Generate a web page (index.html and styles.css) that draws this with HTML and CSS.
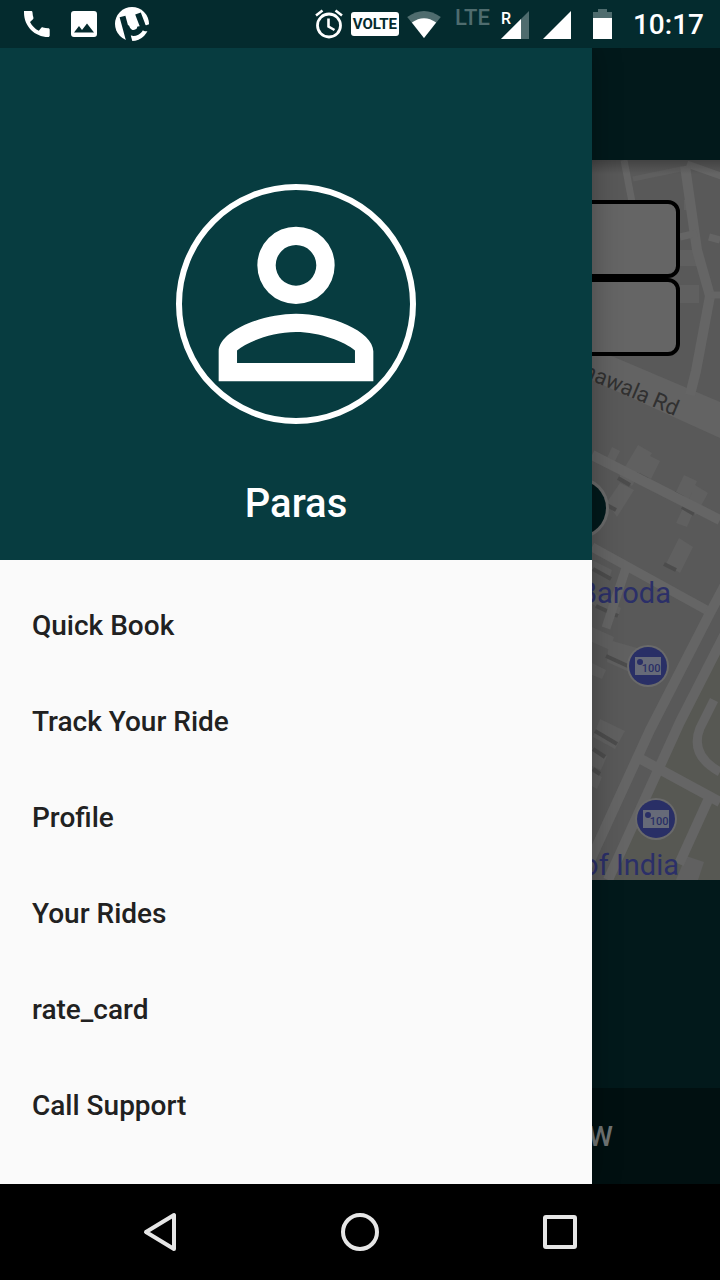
FILE: index.html
```html
<!DOCTYPE html>
<html lang="en">
<head>
<meta charset="utf-8">
<meta name="viewport" content="width=device-width, initial-scale=1">
<title>Ride booking</title>
<link rel="stylesheet" href="styles.css">
</head>
<body>
<header class="status">
  <div class="status-group">
    <svg class="icon-slot" viewBox="0 0 34 34" aria-label="Phone"><path fill="#fff" d="M4 5h7c.9 0 1.400.5 1.500 1.400.1 1.800.4 3.500.9 5.200.2.600 0 1.200-.4 1.600l-3 2.800c2 3.900 4.900 6.800 8.800 8.800l2.500-3c.5-.5 1.100-.6 1.700-.4 1.600.5 3.400.8 5.200.9.900 0 1.500.6 1.500 1.500v5.700c0 .9-.6 1.500-1.500 1.500C14.800 31 4 20.300 4 6.500z" transform="translate(1 -1)"/></svg>
    <svg class="icon-slot" viewBox="0 0 34 34" aria-label="Picture"><path fill="#fff" fill-rule="evenodd" d="M7 4h20q3 0 3 3v20q0 3-3 3H7q-3 0-3-3V7q0-3 3-3zM7 25.500h20l-7-9-5 6.500-3-4z"/></svg>
    <svg class="icon-slot" viewBox="0 0 34 34" aria-label="Torrent"><circle cx="17" cy="17" r="17" fill="#fff"/><path fill="none" stroke="#042b2e" stroke-width="6" d="M7.500 9.500L15 37M11 19c2 7 7 8 11 6 3-1.500 3.500-4 3-6M23 6.500L27 17c1.500 5 4 5 8 3"/></svg>
  </div>
  <div class="status-group status-right">
    <svg width="28" height="30" viewBox="0 0 28 30" fill="none" stroke="#fff" aria-label="Alarm"><circle cx="14" cy="16.500" r="11.500" stroke-width="2.800"/><path stroke-width="2.600" d="M13.500 9.500v8l6 3.500M1 6.500l6.500-5M27 6.500l-6.500-5"/></svg>
    <span class="volte">VOLTE</span>
    <svg width="34" height="28" viewBox="0 0 36 30" aria-label="Wi-Fi"><path fill="#4f6c6e" d="M0 7.500Q18-5.500 36 7.500L18 30z"/><path fill="#fff" d="M5 13.500Q18 4 31 13.500L18 30z"/></svg>
    <span class="lte">LTE</span>
    <span class="roaming">R<svg class="signal" width="28" height="28" viewBox="0 0 28 28"><path fill="#4f6c6e" d="M28 0v28H0z"/><path fill="#fff" d="M20 8v20H0z"/></svg></span>
    <svg class="second-signal" width="28" height="28" viewBox="0 0 28 28" aria-label="Signal"><path fill="#fff" d="M28 0v28H0z"/></svg>
    <svg class="battery" width="19" height="30" viewBox="0 0 19 30" aria-label="Battery"><path fill="#4f6c6e" d="M5 0h9v3h5v6H0V3h5z"/><path fill="#fff" d="M0 9h19v21H0z"/></svg>
    <time class="clock">10:17</time>
  </div>
</header>

<main class="screen">
  <section class="booking">
    <div class="appbar"></div>
    <div class="map">
      <svg class="map-canvas" viewBox="0 0 720 720" preserveAspectRatio="xMaxYMid slice">
        <defs>
          <linearGradient id="fade" x1="0" y1="0" x2="0" y2="1"><stop offset="0" stop-color="#000" stop-opacity=".25"/><stop offset="1" stop-color="#000" stop-opacity="0"/></linearGradient>
          <g id="atm">
            <circle r="21" fill="#6a6a6a"/><circle r="19" fill="#292f66"/>
            <path fill="#666a78" d="M-13-9h26V9h-26z"/><circle cx="-8" cy="-4" r="3" fill="#292f66"/>
            <text x="3" y="6" class="atm-label">100</text>
          </g>
        </defs>
        <path fill="#595959" d="M0 0h720v720H0z"/>
        <path fill="#575853" d="M720 478v242H610l70-160z"/>
        <g fill="#606060">
          <path d="M680 90h16l2 16h-18zM680 125h19v18h-19zM684 40h6l2 10h-8z"/>
          <path fill="#636363" d="M592 190l22 7 106 45v36l-128-58z"/>
          <path d="M619 317l19-32 14 8-20 33zM607 342l13-19 14 7-17 27zM640 313l8-18 12 6-9 18zM676 332l8-17 13 6-8 18zM686 347l9-22 13 8-12 22zM676 363l7-15 10 5-6 14zM606 300l6-13 8 4-7 14z"/>
          <path d="M666 404l13-26 14 9-13 26zM592 400l20 10-3 9-17-10zM594 433l27 15-3 9-28-14zM592 467l22 10-4 13-18-8zM609 480l42 12-8 26-36-16zM592 503l14 7-4 9-10-4zM600 559l25 12-10 18-22-12zM592 588l15 8-6 14-9-4zM686 696l18 6-6 18h-22zM592 612l10 5-5 12-5-3z"/>
        </g>
        <g fill="none" stroke="#4c4c4c" stroke-width="4">
          <path d="M618 318l12 7M636 314l12 6M603 343l13 7M674 333l9 5M682 347l12 7M664 404l12 6M593 409l18 10M596 446l22 10M606 496l35 16M595 571l22 13M593 589l12 8M593 609l7 5"/>
        </g>
        <g fill="none" stroke="#656565">
          <path stroke-width="7" d="M624 0l8 42M687 4l34 12"/>
          <path stroke="#5f5f5f" stroke-width="5" d="M633 19l48-10"/>
          <path stroke-width="10" d="M685 6l12 84 13 46-14 75-6 24M592 295l128 65"/>
          <path stroke-width="7" d="M680 77l17-4M709 77l11 3M711 135h9"/>
          <path stroke-width="9" d="M592 387l118 65M626 408l-20 60"/>
          <path stroke-width="10" d="M728 419l-18 34-60 117-66 144M732 460l-52 102-72 158M637 597l83 45M709 638l-30 66"/>
          <path stroke-width="9" d="M714 540l-14 28c-8 20 2 34 20 44"/>
        </g>
        <circle cx="578" cy="348" r="31" fill="#6a6a6a"/><circle cx="578" cy="348" r="28" fill="#02191b"/>
        <text class="road-label" transform="translate(675 256) rotate(23)">hawala Rd</text>
        <text class="place-label" x="671" y="443">Baroda</text>
        <text class="place-label" x="679" y="715">of India</text>
        <use href="#atm" x="648" y="506"/>
        <use href="#atm" x="656" y="659"/>
        <path fill="url(#fade)" d="M0 0h720v14H0z"/>
      </svg>
      <form class="route">
        <input class="route-field" type="text" aria-label="Pickup">
        <input class="route-field" type="text" aria-label="Drop">
      </form>
    </div>
    <div class="details"></div>
    <button class="book" type="button">W</button>
  </section>

  <aside class="drawer">
    <div class="profile">
      <div class="avatar">
        <svg class="avatar-icon" viewBox="0 0 24 24" fill="#fff" fill-rule="evenodd" aria-hidden="true"><path d="M12 5.900a2.100 2.100 0 1 0 0 4.200a2.100 2.100 0 1 0 0-4.200M12 4a4 4 0 1 1 0 8a4 4 0 1 1 0-8zM12 13C8.500 13 4 14.800 4 16.900V20h16v-3.100C20 14.800 15.500 13 12 13zm0 1.900c2.500 0 5 1 6.100 1.900v1.300H5.900v-1.300C7 15.900 9.500 14.900 12 14.900z"/></svg>
      </div>
      <h1 class="name">Paras</h1>
    </div>
    <nav class="menu">
      <a class="menu-item" href="#book">Quick Book</a>
      <a class="menu-item" href="#track">Track Your Ride</a>
      <a class="menu-item" href="#profile">Profile</a>
      <a class="menu-item" href="#rides">Your Rides</a>
      <a class="menu-item" href="#rates">rate_card</a>
      <a class="menu-item" href="#support">Call Support</a>
    </nav>
  </aside>
</main>

<footer class="navbar">
  <button class="nav-button" type="button" aria-label="Back"><svg width="40" height="40" viewBox="0 0 40 40"><path d="M6 20L34 3v34z"/></svg></button>
  <button class="nav-button" type="button" aria-label="Home"><svg width="40" height="40" viewBox="0 0 40 40"><circle cx="20" cy="20" r="17"/></svg></button>
  <button class="nav-button" type="button" aria-label="Recents"><svg width="40" height="40" viewBox="0 0 40 40"><rect x="5" y="5" width="30" height="30" rx="1"/></svg></button>
</footer>
</body>
</html>
```

FILE: styles.css
```css
* { box-sizing: border-box; }

body {
  margin: 0;
  min-height: 100vh;
  display: flex;
  flex-direction: column;
  background: #000;
  font-family: Roboto, "Liberation Sans", sans-serif;
  font-weight: 500;
}

svg { display: block; flex: none; }

/* Status bar */
.status {
  position: relative;
  z-index: 2;
  height: 48px;
  padding: 0 16px 0 19px;
  display: flex;
  align-items: center;
  justify-content: space-between;
  background: #042b2e;
  color: #fff;
}
.status-group { display: flex; align-items: center; gap: 14px; }
.status-right { gap: 8px; }
.icon-slot { width: 34px; height: 34px; }
.volte {
  width: 48px;
  height: 24px;
  border-radius: 3px;
  background: #fff;
  color: #042b2e;
  font-size: 15px;
  font-weight: 700;
  line-height: 25px;
  text-align: center;
}
.lte {
  margin: 0 3px 12px 6px;
  color: #4f6c6e;
  font-size: 22px;
  line-height: 24px;
}
.roaming {
  position: relative;
  width: 28px;
  height: 28px;
  font-size: 16px;
  line-height: 16px;
}
.signal { position: absolute; inset: 0; }
.roaming, .second-signal { margin-top: 2px; }
.second-signal { margin-left: 6px; }
.battery { margin: 0 13px 0 14px; }
.clock { font-size: 28px; line-height: 48px; padding-top: 2px; }

/* Screen: booking page with the drawer on top */
.screen { flex: 1; display: grid; }
.booking, .drawer { grid-area: 1 / 1; }
.booking {
  display: flex;
  flex-direction: column;
  background: #02191b;
}
.appbar { height: 112px; }
.map { flex: 1; position: relative; overflow: hidden; }
.map-canvas { position: absolute; inset: 0; width: 100%; height: 100%; }
.route {
  position: relative;
  padding: 40px;
  display: flex;
  flex-direction: column;
}
.route-field {
  width: 100%;
  height: 78px;
  border: 4px solid #000;
  border-radius: 12px;
  background: #656565;
}
.details { height: 208px; }
.book {
  height: 96px;
  padding: 0 107px;
  border: 0;
  background: #011011;
  color: #707575;
  font: inherit;
  font-size: 28px;
  text-align: right;
}
.road-label { font-size: 22px; font-weight: 400; fill: #303030; text-anchor: end; }
.place-label { font-size: 29px; font-weight: 400; fill: #2b2f68; text-anchor: end; }
.atm-label { font-size: 11px; fill: #292f66; text-anchor: middle; }

.drawer {
  z-index: 1;
  margin-right: 128px;
  background: #fafafa;
  box-shadow: 0 0 28px rgba(0, 0, 0, .3);
}
.profile {
  height: 512px;
  padding-top: 136px;
  display: flex;
  flex-direction: column;
  align-items: center;
  gap: 56px;
  background: #073c40;
}
.avatar {
  width: 240px;
  height: 240px;
  border: 6px solid #fff;
  border-radius: 50%;
  display: flex;
  align-items: center;
  justify-content: center;
}
.avatar-icon { width: 232px; height: 232px; }
.name {
  margin: 0;
  color: #fff;
  font-size: 40px;
  font-weight: 500;
  line-height: 48px;
}
.menu { padding: 18px 0 14px; display: flex; flex-direction: column; }
.menu-item {
  padding: 0 32px;
  color: #212121;
  font-size: 28px;
  line-height: 96px;
  text-decoration: none;
}

/* System navigation */
.navbar {
  position: relative;
  z-index: 2;
  height: 96px;
  padding: 0 60px;
  display: grid;
  grid-template-columns: repeat(3, 1fr);
  background: #000;
}
.nav-button {
  display: flex;
  align-items: center;
  justify-content: center;
  border: 0;
  background: none;
  fill: none;
  stroke: #e6e6e6;
  stroke-width: 4px;
  stroke-linejoin: round;
}
```
